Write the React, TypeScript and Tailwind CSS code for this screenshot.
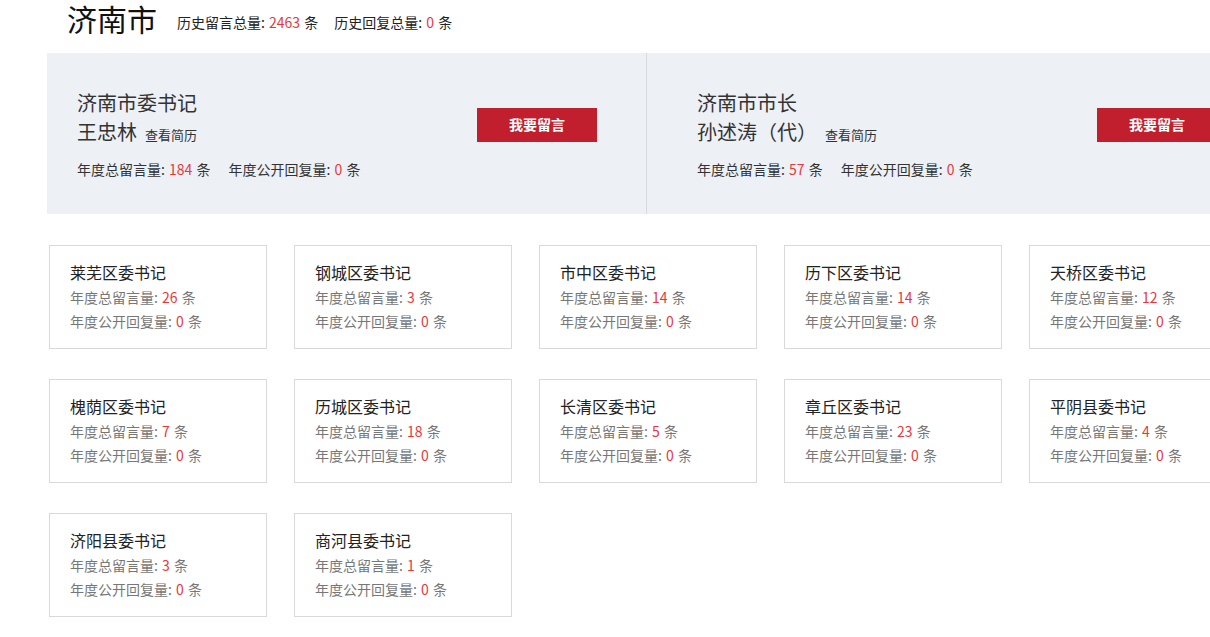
import React from 'react'

const districts = [
  { name: '莱芜区委书记', total: 26, reply: 0 },
  { name: '钢城区委书记', total: 3, reply: 0 },
  { name: '市中区委书记', total: 14, reply: 0 },
  { name: '历下区委书记', total: 14, reply: 0 },
  { name: '天桥区委书记', total: 12, reply: 0 },
  { name: '槐荫区委书记', total: 7, reply: 0 },
  { name: '历城区委书记', total: 18, reply: 0 },
  { name: '长清区委书记', total: 5, reply: 0 },
  { name: '章丘区委书记', total: 23, reply: 0 },
  { name: '平阴县委书记', total: 4, reply: 0 },
  { name: '济阳县委书记', total: 3, reply: 0 },
  { name: '商河县委书记', total: 1, reply: 0 },
]

const leaders = [
  { title: '济南市委书记', name: '王忠林', total: 184, reply: 0, pad: 'pl-[30px]' },
  { title: '济南市市长', name: '孙述涛（代）', total: 57, reply: 0, pad: 'pl-[50px]' },
]

const Num = ({ v }: { v: number }) => <span className="mx-[1px] text-[#e4393c]">{v}</span>

export default function App() {
  return (
    <div className="w-full overflow-hidden bg-white font-['Noto_Sans_CJK_SC',sans-serif] text-[#333]">
      <div className="ml-[47px] w-[1200px]">
        {/* header */}
        <div className="flex h-[53px] items-start">
          <h1 className="ml-[20px] text-[30px] leading-[36px] font-normal text-[#111]">济南市</h1>
          <div className="ml-[20px] mt-[12px] text-[14px] leading-[20px] text-[#222]">
            历史留言总量: <Num v={2463} /> 条<span className="ml-[16px]">历史回复总量: </span>
            <Num v={0} /> 条
          </div>
        </div>

        {/* leaders banner */}
        <div className="flex h-[161px] bg-[#edf0f5]">
          {leaders.map((l, i) => (
            <div
              key={l.title}
              className={`flex w-[600px] shrink-0 items-center ${l.pad} ${i === 0 ? 'border-r border-[#d6dae0]' : ''}`}
            >
              <div className="w-[400px] shrink-0">
                <div className="text-[20px] leading-[28px] text-[#333]">{l.title}</div>
                <div className="flex items-baseline leading-[30px]">
                  <span className="text-[20px] text-[#333]">{l.name}</span>
                  <span className="ml-[8px] text-[13px] text-[#333]">查看简历</span>
                </div>
                <div className="mt-[9px] text-[14px] leading-[20px] text-[#333]">
                  年度总留言量: <Num v={l.total} /> 条<span className="ml-[18px]">年度公开回复量: </span>
                  <Num v={l.reply} /> 条
                </div>
              </div>
              <button className="mb-[18px] h-[34px] w-[120px] shrink-0 bg-[#c11f2e] text-[14px] font-bold text-white">
                我要留言
              </button>
            </div>
          ))}
        </div>

        {/* district cards */}
        <div className="mt-[31px] ml-[2px] grid grid-cols-[repeat(5,218px)] gap-x-[27px] gap-y-[30px]">
          {districts.map((d) => (
            <div key={d.name} className="h-[104px] border border-[#d9d9d9] pl-[20px] pt-[15px]">
              <div className="text-[16px] leading-[22px] text-[#222]">{d.name}</div>
              <div className="mt-[2px] text-[14px] leading-[24px] text-[#777]">
                年度总留言量: <Num v={d.total} /> 条
              </div>
              <div className="text-[14px] leading-[24px] text-[#777]">
                年度公开回复量: <Num v={d.reply} /> 条
              </div>
            </div>
          ))}
        </div>
      </div>
    </div>
  )
}
